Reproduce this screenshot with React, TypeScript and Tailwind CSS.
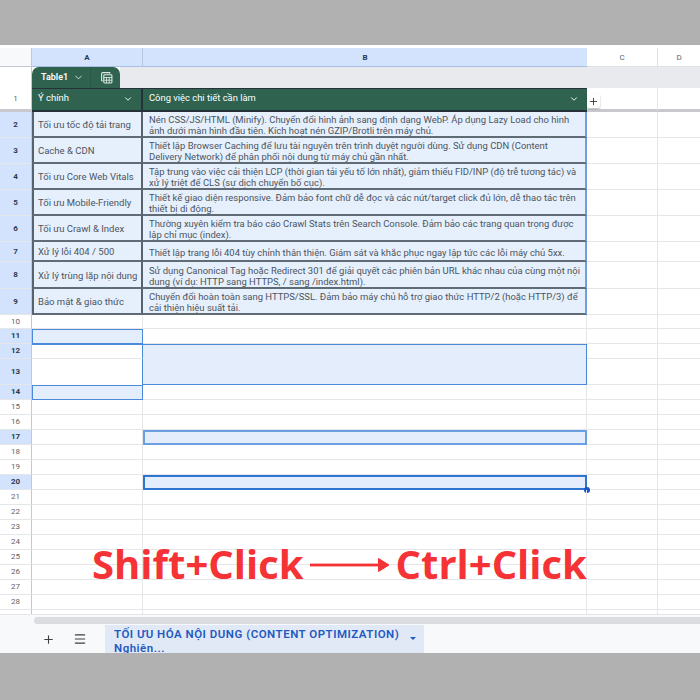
import { ChevronDown, Plus, Menu } from "lucide-react";

type Row = {
  n: number;
  h: string;
  a?: string;
  b?: string;
  head?: boolean;
  aCls?: string;
  bCls?: string;
};

const dataA = "bg-[#e6effc] border-l-2 border-l-[#56626c] border-r-2 border-r-[#56626c] border-b-2 border-b-[#5f6b75]";
const dataB = "bg-[#e6effc] border-r-2 border-r-[#6f9fdc] border-b-2 border-b-[#5f6b75]";

const tableRows: Row[] = [
  { n: 2, h: "h-[26px]", a: "Tối ưu tốc độ tải trang", b: "Nén CSS/JS/HTML (Minify). Chuyển đổi hình ảnh sang định dạng WebP. Áp dụng Lazy Load cho hình\nảnh dưới màn hình đầu tiên. Kích hoạt nén GZIP/Brotli trên máy chủ." },
  { n: 3, h: "h-[26px]", a: "Cache & CDN", b: "Thiết lập Browser Caching để lưu tài nguyên trên trình duyệt người dùng. Sử dụng CDN (Content\nDelivery Network) để phân phối nội dung từ máy chủ gần nhất." },
  { n: 4, h: "h-[26px]", a: "Tối ưu Core Web Vitals", b: "Tập trung vào việc cải thiện LCP (thời gian tải yếu tố lớn nhất), giảm thiểu FID/INP (độ trễ tương tác) và\nxử lý triệt để CLS (sự dịch chuyển bố cục)." },
  { n: 5, h: "h-[26px]", a: "Tối ưu Mobile-Friendly", b: "Thiết kế giao diện responsive. Đảm bảo font chữ dễ đọc và các nút/target click đủ lớn, dễ thao tác trên\nthiết bị di động." },
  { n: 6, h: "h-[26px]", a: "Tối ưu Crawl & Index", b: "Thường xuyên kiểm tra báo cáo Crawl Stats trên Search Console. Đảm bảo các trang quan trọng được\nlập chỉ mục (index)." },
  { n: 7, h: "h-[20px]", a: "Xử lý lỗi 404 / 500", b: "Thiết lập trang lỗi 404 tùy chỉnh thân thiện. Giám sát và khắc phục ngay lập tức các lỗi máy chủ 5xx." },
  { n: 8, h: "h-[27px]", a: "Xử lý trùng lặp nội dung", b: "Sử dụng Canonical Tag hoặc Redirect 301 để giải quyết các phiên bản URL khác nhau của cùng một nội\ndung (ví dụ: HTTP sang HTTPS, / sang /index.html)." },
  { n: 9, h: "h-[26px]", a: "Bảo mật & giao thức", b: "Chuyển đổi hoàn toàn sang HTTPS/SSL. Đảm bảo máy chủ hỗ trợ giao thức HTTP/2 (hoặc HTTP/3) để\ncải thiện hiệu suất tải." },
];

const line = "border-b border-b-[#e4e6e9] border-r border-r-[#e4e6e9]";
const selFill = "bg-[#e3edfc] border border-[#4a8ad8]";

const emptyRows: Row[] = [
  { n: 10, h: "h-[14px]" },
  { n: 11, h: "h-[15px]", head: true, aCls: selFill },
  { n: 12, h: "h-[15px]", head: true, aCls: "border-t border-t-[#4a8ad8] border-r border-r-[#4a8ad8] border-b border-b-[#e4e6e9]", bCls: "bg-[#e3edfc] border-t border-t-[#4a8ad8] border-r border-r-[#4a8ad8]" },
  { n: 13, h: "h-[26px]", head: true, aCls: "border-r border-r-[#4a8ad8]", bCls: "bg-[#e3edfc] border-b border-b-[#4a8ad8] border-r border-r-[#4a8ad8]" },
  { n: 14, h: "h-[15px]", head: true, aCls: selFill },
  { n: 15, h: "h-[15px]" },
  { n: 16, h: "h-[15px]" },
  { n: 17, h: "h-[15px]", head: true, bCls: "bg-[#e3edfc] border-2 border-[#6a9fe0]" },
  { n: 18, h: "h-[15px]" },
  { n: 19, h: "h-[15px]" },
  { n: 20, h: "h-[15px]", head: true, bCls: "bg-[#e3edfc] border-2 border-[#2f74cf]" },
  { n: 21, h: "h-[15px]" },
  { n: 22, h: "h-[15px]" },
  { n: 23, h: "h-[15px]" },
  { n: 24, h: "h-[15px]" },
  { n: 25, h: "h-[15px]" },
  { n: 26, h: "h-[15px]" },
  { n: 27, h: "h-[15px]" },
  { n: 28, h: "h-[15px]" },
  { n: 29, h: "h-[15px]" },
];

const grid = "grid grid-cols-[32px_111px_444px_71px_42px]";

function RowNum({ n, on }: { n: number; on?: boolean }) {
  return (
    <div
      className={
        "flex items-center justify-center text-[8px] border-r border-r-[#c4c7cc] border-b border-b-[#e4e6e9] " +
        (on ? "bg-[#d3e3fd] font-bold text-[#2c3a50]" : "bg-white text-[#5f6368]")
      }
    >
      {n}
    </div>
  );
}

function TableIcon() {
  return (
    <svg width="13" height="13" viewBox="0 0 12 12" fill="none" stroke="#dfe9e4" strokeWidth="1">
      <path d="M2.5 9 H1.5 V2.5 A1 1 0 0 1 2.5 1.5 H9 V2.5" />
      <rect x="3.5" y="3.5" width="7.5" height="7.5" rx="0.8" />
      <path d="M3.5 6 H11 M3.5 8.5 H11 M6 6 V11 M8.5 6 V11" strokeWidth="0.8" />
    </svg>
  );
}

export default function App() {
  return (
    <div className="w-[700px] h-[700px] flex flex-col overflow-hidden bg-[#b1b1b1] font-['Roboto','Liberation_Sans',sans-serif]">
      <div className="h-[45px] shrink-0" />
      <div className="h-[608px] shrink-0 bg-white flex flex-col relative">
        <div className="h-[3px] shrink-0" />

        {/* column letters */}
        <div className={grid + " h-[19px] shrink-0 text-[8px]"}>
          <div className="bg-[#f8f9fa] border-r border-r-[#c4c7cc] border-b border-b-[#c4c7cc]" />
          <div className="bg-[#d3e3fd] border-r border-r-[#b5c7e3] border-b border-b-[#a9bfe0] flex items-center justify-center pt-[2px] font-bold text-[#2c3a50]">A</div>
          <div className="bg-[#d3e3fd] border-b border-b-[#a9bfe0] flex items-center justify-center pt-[2px] font-bold text-[#2c3a50]">B</div>
          <div className="border-r border-r-[#dfe1e5] border-b border-b-[#dfe1e5] flex items-center justify-center pt-[2px] text-[#5f6368]">C</div>
          <div className="border-b border-b-[#dfe1e5] flex items-center justify-center pt-[2px] text-[#5f6368]">D</div>
        </div>

        {/* table tab band */}
        <div className="flex h-[21px] shrink-0">
          <div className="w-[32px] bg-white border-r border-r-[#c4c7cc]" />
          <div className="w-[88px] bg-[#2f6350] rounded-t-[7px] flex items-center text-white text-[9px] font-semibold pl-[9px]">
            <span>Table1</span>
            <ChevronDown size={11} strokeWidth={2} className="ml-[5px] text-[#d5e2dc]" />
            <div className="ml-[6px] h-full w-px bg-[#295845]" />
            <div className="ml-[9px]">
              <TableIcon />
            </div>
          </div>
          <div className="flex-1 bg-[#e8eaed]" />
        </div>

        {/* row 1, table header */}
        <div className={grid + " h-[24px] shrink-0"}>
          <div className="flex items-center justify-center text-[8px] text-[#5f6368] bg-white border-r border-r-[#c4c7cc] border-b-[3px] border-b-[#c7c9cc]">1</div>
          <div className="bg-[#2f6350] border-b-2 border-b-[#27313a] border-r-2 border-r-[#27313a] border-t border-t-[#27313a] flex items-center justify-between text-white text-[9.5px] pl-[6px] pr-[8px] pb-[2px]">
            <span>Ý chính</span>
            <ChevronDown size={10} strokeWidth={2.2} />
          </div>
          <div className="bg-[#2f6350] border-b-2 border-b-[#27313a] border-t border-t-[#27313a] flex items-center justify-between text-white text-[9.4px] pl-[6px] pr-[8px] pb-[2px]">
            <span>Công việc chi tiết cần làm</span>
            <ChevronDown size={10} strokeWidth={2.2} />
          </div>
          <div className="relative border-r border-r-[#e4e6e9] border-b-[3px] border-b-[#c7c9cc]">
            <div className="absolute left-0 top-[6px] w-[13px] h-[14px] bg-white rounded-[2px] shadow-[0_1px_2px_rgba(0,0,0,0.3)] flex items-center justify-center">
              <Plus size={11} strokeWidth={2} className="text-[#3c4043]" />
            </div>
          </div>
          <div className="border-b-[3px] border-b-[#c7c9cc]" />
        </div>

        {/* table rows */}
        {tableRows.map((r) => (
          <div key={r.n} className={grid + " shrink-0 " + r.h}>
            <RowNum n={r.n} on />
            <div className={dataA + " flex items-center pl-[4px] pt-[3px] text-[9.5px] text-[#4b5560] whitespace-nowrap overflow-hidden"}>{r.a}</div>
            <div className={dataB + " flex items-center pl-[6px] pt-[2px] text-[9.45px] leading-[11px] text-[#4b5560] whitespace-pre-line overflow-hidden"}>{r.b}</div>
            <div className={line} />
            <div className="border-b border-b-[#e4e6e9]" />
          </div>
        ))}

        {/* empty rows */}
        <div className="flex-1 overflow-hidden">
          {emptyRows.map((r) => (
            <div key={r.n} className={grid + " " + r.h}>
              <RowNum n={r.n} on={r.head} />
              <div className={r.aCls ?? line} />
              <div className={"relative " + (r.bCls ?? line)}>
                {r.n === 20 && <div className="absolute right-[-5px] bottom-[-5px] w-[6px] h-[6px] rounded-full bg-[#1a56c4]" />}
              </div>
              <div className={line} />
              <div className="border-b border-b-[#e4e6e9]" />
            </div>
          ))}
        </div>

        {/* scrollbar */}
        <div className="h-[11px] shrink-0 bg-[#f8f9fa] border-t border-t-[#e4e6e9] pl-[34px] flex items-center">
          <div className="flex-1 h-[7px] bg-[#dadce0] rounded-l-full" />
        </div>

        {/* sheet tabs */}
        <div className="h-[28px] shrink-0 bg-[#f8f9fa] flex text-[#3c4043]">
          <div className="w-[105px] flex items-center pl-[42px]">
            <Plus size={13} strokeWidth={2} />
            <Menu size={14} strokeWidth={2} className="ml-[18px]" />
          </div>
          <div className="w-[319px] h-[28px] bg-[#e1e9f7] flex items-start pl-[9px] pr-[8px] pt-[2px] overflow-hidden">
            <div className="w-[290px] shrink-0 text-[11.5px] font-semibold leading-[14px] tracking-[0.5px] text-[#1f5ac0]">
              TỐI ƯU HÓA NỘI DUNG (CONTENT OPTIMIZATION)
              <br />
              Nghiên...
            </div>
            <div className="ml-[6px] mt-[10px] w-0 h-0 border-l-[3px] border-r-[3px] border-t-[3px] border-l-transparent border-r-transparent border-t-[#1f5ac0]" />
          </div>
        </div>

        {/* annotation over the sheet */}
        <div className="absolute left-[92px] top-[494px] flex items-center font-['Open_Sans',sans-serif] font-bold text-[40px] leading-[50px] text-[#f53235]">
          <span>Shift+Click</span>
          <svg width="80" height="16" viewBox="0 0 80 16" className="mx-[6px] mt-[2px]">
            <rect x="0" y="6.6" width="70" height="2.8" fill="#f53235" />
            <path d="M68.5 1.5 L79 8 L68.5 14.5 Z" fill="#f53235" stroke="#f53235" strokeWidth="1" strokeLinejoin="round" />
          </svg>
          <span>Ctrl+Click</span>
        </div>
      </div>
    </div>
  );
}
